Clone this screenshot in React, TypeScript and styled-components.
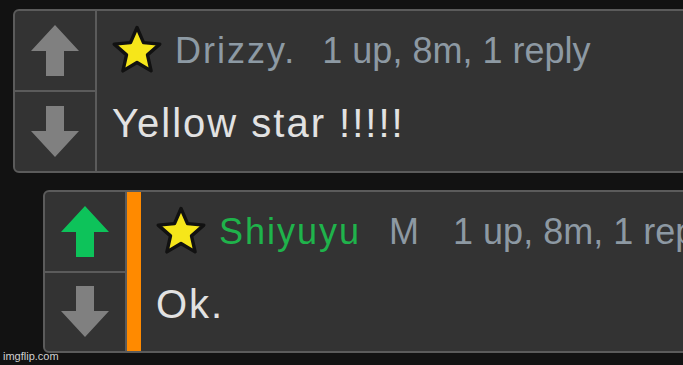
import React from 'react';
import styled, { createGlobalStyle } from 'styled-components';

const GlobalStyle = createGlobalStyle`
  html, body {
    margin: 0;
    padding: 0;
    background: #121212;
    overflow: hidden;
  }
  body {
    font-family: 'Liberation Sans', Arial, sans-serif;
  }
`;

const StyledPage = styled.div`
  position: relative;
  width: 683px;
  height: 365px;
  padding-top: 9px;
  box-sizing: border-box;
  display: flex;
  flex-direction: column;
  gap: 17px;
  overflow: hidden;
`;

const StyledCard = styled.div<{ $indent: number }>`
  margin-left: ${({ $indent }) => $indent}px;
  width: 800px;
  flex-shrink: 0;
  display: flex;
  background: #333333;
  border: 2px solid #5b5b5b;
  border-radius: 6px;
  box-sizing: border-box;
  height: ${({ $indent }) => ($indent > 20 ? 163 : 164)}px;
`;

const StyledVotes = styled.div`
  width: 80px;
  display: flex;
  flex-direction: column;
  border-right: 2px solid #5b5b5b;
  flex-shrink: 0;
`;

const StyledVoteCell = styled.div`
  flex: 1;
  display: flex;
  align-items: center;
  justify-content: center;
  & + & {
    border-top: 2px solid #5b5b5b;
  }
`;

const StyledReplyBar = styled.div`
  width: 14px;
  background: #ff8a00;
  flex-shrink: 0;
`;

const StyledBody = styled.div`
  padding: 14px 0 0 15px;
  display: flex;
  flex-direction: column;
`;

const StyledHeader = styled.div`
  display: flex;
  align-items: center;
  height: 48px;
  font-size: 36px;
  line-height: 1;
  white-space: nowrap;
`;

const StyledName = styled.span<{ $color: string }>`
  color: ${({ $color }) => $color};
  margin-left: 13px;
  padding-top: 3px;
  letter-spacing: 2px;
`;

const StyledTag = styled.span<{ $gap: number }>`
  color: #8d99a3;
  margin-left: ${({ $gap }) => $gap}px;
  padding-top: 3px;
`;

const StyledText = styled.div`
  margin-top: 30px;
  font-size: 40px;
  line-height: 1;
  letter-spacing: 2px;
  color: #e2e2e2;
`;

const StyledWatermark = styled.div`
  position: absolute;
  left: 3px;
  bottom: 3px;
  font-size: 11px;
  line-height: 1;
  color: #d0d0d0;
`;

const Arrow = ({ down, color }: { down?: boolean; color: string }) => (
  <svg width="48" height="51" viewBox="0 0 48 51" style={{ transform: down ? 'rotate(180deg)' : undefined }}>
    <polygon points="24,0 48,26 33,26 33,51 15,51 15,26 0,26" fill={color} />
  </svg>
);

const Star = () => (
  <svg width="50" height="50" viewBox="0 0 50 50" style={{ overflow: 'visible' }}>
    <polygon
      points="25,3.5 31.5,18.6 47.8,20.1 35.5,30.9 39.1,46.9 25,38.5 10.9,46.9 14.5,30.9 2.2,20.1 18.5,18.6"
      fill="#f6e61a"
      stroke="#111"
      strokeWidth="3.4"
      strokeLinejoin="round"
    />
  </svg>
);

type Comment = {
  indent: number;
  name: string;
  nameColor: string;
  tag?: string;
  meta: string;
  text: string;
  upvoted?: boolean;
  reply?: boolean;
};

const comments: Comment[] = [
  { indent: 13, name: 'Drizzy.', nameColor: '#8d9aa4', meta: '1 up, 8m, 1 reply', text: 'Yellow star !!!!!' },
  {
    indent: 43,
    name: 'Shiyuyu',
    nameColor: '#1fb34b',
    tag: 'M',
    meta: '1 up, 8m, 1 reply',
    text: 'Ok.',
    upvoted: true,
    reply: true,
  },
];

const App = () => {
  return (
    <>
      <GlobalStyle />
      <StyledPage>
        {comments.map((c) => (
          <StyledCard key={c.name} $indent={c.indent}>
            <StyledVotes>
              <StyledVoteCell>
                <Arrow color={c.upvoted ? '#0dc35a' : '#808080'} />
              </StyledVoteCell>
              <StyledVoteCell>
                <Arrow down color="#808080" />
              </StyledVoteCell>
            </StyledVotes>
            {c.reply && <StyledReplyBar />}
            <StyledBody>
              <StyledHeader>
                <Star />
                <StyledName $color={c.nameColor}>{c.name}</StyledName>
                {c.tag && <StyledTag $gap={28}>{c.tag}</StyledTag>}
                <StyledTag $gap={c.tag ? 34 : 26}>{c.meta}</StyledTag>
              </StyledHeader>
              <StyledText>{c.text}</StyledText>
            </StyledBody>
          </StyledCard>
        ))}
        <StyledWatermark>imgflip.com</StyledWatermark>
      </StyledPage>
    </>
  );
};

export default App;
